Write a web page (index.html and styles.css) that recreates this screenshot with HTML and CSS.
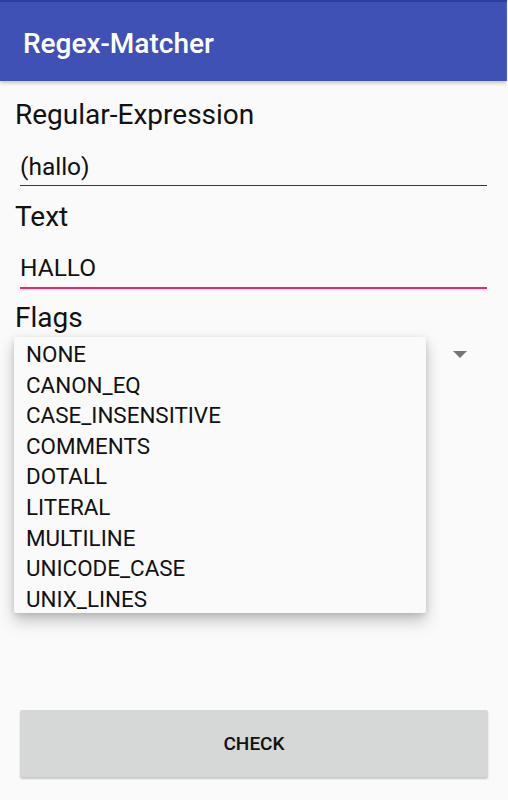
FILE: index.html
```html
<!DOCTYPE html>
<html>
<head>
<meta charset="utf-8">
<link rel="stylesheet" href="styles.css">
</head>
<body>
<div class="page">
  <div class="statusbar"></div>
  <header class="appbar"><h1 class="title">Regex-Matcher</h1></header>
  <main class="content">
    <div class="label label-first">Regular-Expression</div>
    <div class="field"><span class="value">(hallo)</span></div>
    <div class="label">Text</div>
    <div class="field focused"><span class="value">HALLO</span></div>
    <div class="label">Flags</div>
    <div class="spinner">
      <svg class="arrow" width="14" height="7" viewBox="0 0 14 7"><path d="M0 0 H14 L7 7 Z" fill="#757575"/></svg>
    </div>
    <div class="popup">
      <div class="item">NONE</div>
      <div class="item">CANON_EQ</div>
      <div class="item">CASE_INSENSITIVE</div>
      <div class="item">COMMENTS</div>
      <div class="item">DOTALL</div>
      <div class="item">LITERAL</div>
      <div class="item">MULTILINE</div>
      <div class="item">UNICODE_CASE</div>
      <div class="item">UNIX_LINES</div>
    </div>
    <div class="actions">
      <button class="btn">CHECK</button>
    </div>
  </main>
</div>
</body>
</html>
```
FILE: styles.css
```css
html, body {
  margin: 0;
  padding: 0;
  background: #fafafa;
}
body {
  font-family: Roboto, "Liberation Sans", sans-serif;
  color: #111;
}
.page {
  width: 507px;
  height: 800px;
  display: flex;
  flex-direction: column;
  position: relative;
  overflow: hidden;
}
.statusbar {
  height: 2px;
  background: #303f9f;
}
.appbar {
  height: 79px;
  box-sizing: border-box;
  background: #3f51b5;
  border-right: 1px solid #4a5fe0;
  display: flex;
  align-items: center;
  padding: 3px 0 0 23px;
  box-shadow: 0 2px 4px rgba(0,0,0,0.22);
  position: relative;
  z-index: 1;
}
.title {
  margin: 0;
  font-family: "Roboto Medium", Roboto, "Liberation Sans", sans-serif;
  font-size: 28px;
  font-weight: 500;
  color: #fff;
}
.content {
  flex: 1;
  display: flex;
  flex-direction: column;
  padding: 0 20px 0 15px;
  position: relative;
}
.label {
  font-size: 28px;
  line-height: 34px;
  color: #111;
}
.label-first {
  margin-top: 17px;
}
.field {
  margin-left: 5px;
  height: 54px;
  box-sizing: border-box;
  display: flex;
  align-items: flex-end;
  border-bottom: 1px solid #3a3a3a;
  padding-bottom: 3px;
  margin-bottom: 14px;
}
.field.focused {
  border-bottom: 2px solid #ff1f6e;
  height: 55px;
  padding-bottom: 4px;
  margin-bottom: 12px;
}
.value {
  font-size: 24.5px;
  line-height: 30px;
  color: #111;
}
.spinner {
  height: 40px;
  display: flex;
  justify-content: flex-end;
  align-items: flex-start;
  padding: 16px 20px 0 0;
  box-sizing: border-box;
}
.arrow {
  display: block;
}
.popup {
  position: absolute;
  left: 14px;
  top: 256px;
  width: 412px;
  padding: 2px 0 0;
  height: 276px;
  background: #fafafa;
  border-radius: 2px;
  box-shadow: 0 8px 16px rgba(0,0,0,0.22), 0 2px 6px rgba(0,0,0,0.12);
  z-index: 2;
  box-sizing: border-box;
}
.item {
  font-size: 22.4px;
  line-height: 30.6px;
  padding-left: 12px;
  color: #111;
}
.actions {
  margin-top: auto;
  padding: 0 0 23px 5px;
}
.btn {
  width: 468px;
  height: 67px;
  border: none;
  border-radius: 2px;
  background: #d6d7d7;
  font-family: "Roboto Medium", Roboto, "Liberation Sans", sans-serif;
  font-size: 19px;
  font-weight: 500;
  color: #111;
  box-shadow: 0 2px 2px rgba(0,0,0,0.2);
  padding: 0;
  display: block;
}
```
